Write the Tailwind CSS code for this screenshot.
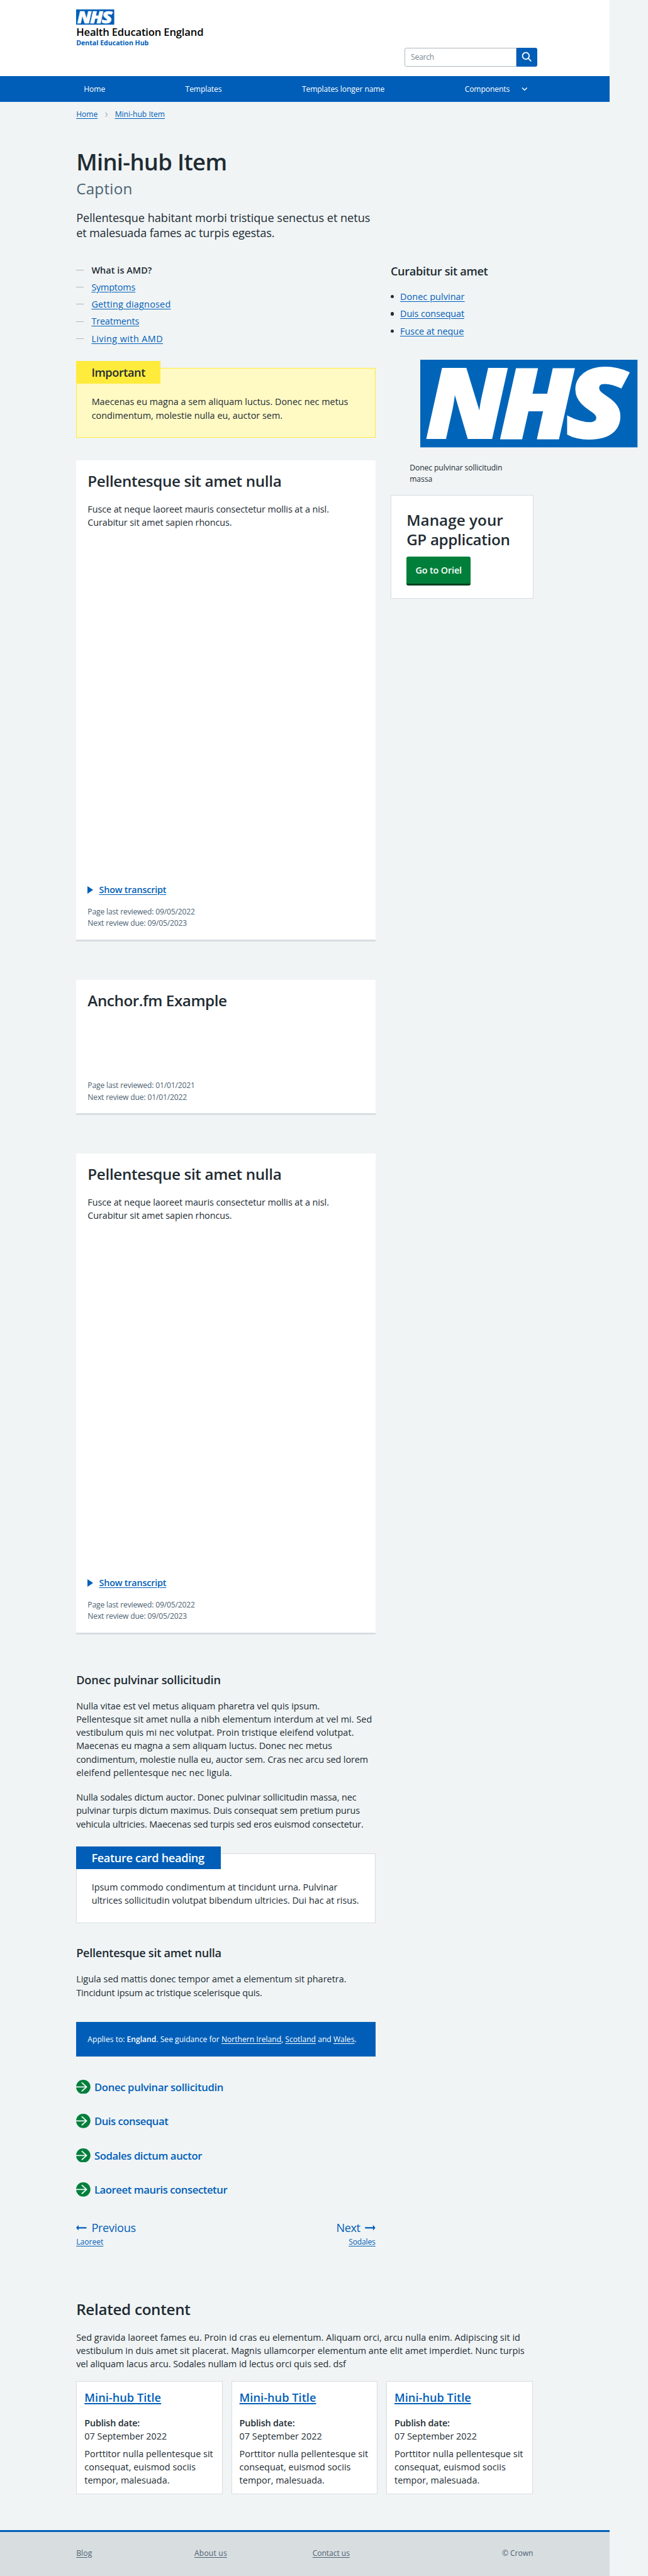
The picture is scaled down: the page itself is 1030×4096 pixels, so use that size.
<!DOCTYPE html>
<html lang="en">
<head>
<meta charset="utf-8">
<title>Mini-hub Item</title>
<script src="https://cdn.jsdelivr.net/npm/@tailwindcss/browser@4"></script>
</head>
<body class="h-[4096px] overflow-hidden bg-[#f0f4f5]">
<div class="flex h-[5410px] w-[1360px] flex-col bg-[#f0f4f5] font-['Open_Sans','Noto_Sans',sans-serif] text-[19px]/[28px] tracking-[-0.0051em] whitespace-nowrap text-[#212b32] [zoom:0.75725]">

  <header class="w-[1280px]">
    <div class="flex h-[160px] justify-between bg-white pr-[152px] pl-[160px]">
      <div class="pt-[20px]">
        <svg class="block h-[32px] w-[80px] overflow-visible" viewBox="0 0 456 184" preserveAspectRatio="none"><rect width="456" height="184" fill="#005eb8"/><g class="tracking-normal" font-family="Open Sans" font-weight="800" font-style="italic" font-size="202" fill="#fff" stroke="#fff" stroke-width="5"><text transform="translate(12.6 164.2) scale(1.047 1)">N</text><text transform="translate(167.5 164.2) scale(1.06 1)">H</text><text transform="translate(306.5 164.2) scale(1.15 1)">S</text></g></svg>
        <p class="mt-[2px] text-[22px]/[26px] font-semibold tracking-[-0.011em] text-black">Health Education England</p>
        <p class="text-[14px]/[20px] font-bold tracking-[-0.001em] text-[#005eb8]">Dental Education Hub</p>
      </div>
      <form class="mt-[100px] flex h-[40px] w-[279px]">
        <div class="flex flex-1 items-center rounded-l-[4px] border border-[#aeb7bd] pt-[1px] pl-[12px] text-[16px]/[24px] tracking-[-0.017em] text-[#768692]">Search</div>
        <div class="flex w-[44px] items-center justify-center rounded-r-[4px] bg-[#005eb8]">
          <svg class="size-[28px]" viewBox="0 0 24 24" fill="#fff"><path d="M19.71 18.29l-4.11-4.1a7 7 0 1 0-1.41 1.41l4.1 4.11a1 1 0 0 0 1.42 0 1 1 0 0 0 0-1.42zM5 10a5 5 0 1 1 5 5 5 5 0 0 1-5-5z"/></svg>
        </div>
      </form>
    </div>
    <nav class="flex h-[54px] items-center justify-between bg-[#005eb8] pt-[1px] pr-[170px] pl-[176px] text-[16px]/[24px] tracking-[-0.008em] text-white">
      <span>Home</span>
      <span>Templates</span>
      <span>Templates longer name</span>
      <span class="flex items-center gap-[22px]"><span>Components</span>
        <svg class="h-[18px] w-[18px]" viewBox="0 0 18 18" fill="none" stroke="#fff" stroke-width="2" stroke-linecap="round" stroke-linejoin="round"><path d="M4.500 6.500L9 11L13.500 6.500"/></svg></span>
    </nav>
  </header>

  <main class="ml-[160px] w-[1180px]">
    <nav class="flex items-center pt-[15px] text-[16px]/[24px] tracking-[0em] text-[#005eb8]">
      <a class="underline underline-offset-2">Home</a>
      <svg class="mx-[11px] h-[14px] w-[14px]" viewBox="0 0 14 14" fill="none" stroke="#aeb7bd" stroke-width="1.800" stroke-linecap="round"><path d="M5.500 3L8.500 7L5.500 11"/></svg>
      <a class="underline underline-offset-2">Mini-hub Item</a>
    </nav>

    <h1 class="mt-[59px] text-[48px]/[56px] font-semibold tracking-[-0.018em]">Mini-hub Item</h1>
    <p class="mt-[9px] text-[32px]/[40px] tracking-[0.01em] text-[#4c6272]">Caption</p>
    <p class="mt-[24px] text-[24px]/[32px] tracking-[-0.0024em]">Pellentesque habitant morbi tristique senectus et netus<br><span class="tracking-[-0.01em]">et malesuada fames ac turpis egestas.</span></p>

    <div class="mt-[48px] flex items-start gap-[32px]">
      <div class="w-[628px]">
        <ul class="flex flex-col gap-[8px] text-[#005eb8]">
          <li class="flex items-center gap-[16px] font-semibold text-[#212b32]"><span class="h-px w-[16px] bg-[#aeb7bd]"></span><span class="tracking-[0.006em]">What is AMD?</span></li>
          <li class="flex items-center gap-[16px]"><span class="h-px w-[16px] bg-[#aeb7bd]"></span><a class="tracking-[-0.012em] underline underline-offset-2">Symptoms</a></li>
          <li class="flex items-center gap-[16px]"><span class="h-px w-[16px] bg-[#aeb7bd]"></span><a class="tracking-[0.016em] underline underline-offset-2">Getting diagnosed</a></li>
          <li class="flex items-center gap-[16px]"><span class="h-px w-[16px] bg-[#aeb7bd]"></span><a class="tracking-[-0.01em] underline underline-offset-2">Treatments</a></li>
          <li class="flex items-center gap-[16px]"><span class="h-px w-[16px] bg-[#aeb7bd]"></span><a class="tracking-[0.03em] underline underline-offset-2">Living with AMD</a></li>
        </ul>

        <section class="mt-[33px] h-[161px]">
          <h3 class="relative z-10 flex h-[48px] w-[177px] items-center bg-[#ffeb3b] pl-[32px] text-[24px]/[32px] font-semibold tracking-[-0.024em]">Important</h3>
          <div class="-mt-[33px] h-[146px] border border-[#ffeb3b] bg-[#fff9c4] pt-[55.5px] pl-[31px] tracking-[0.001em]">Maecenas eu magna a sem aliquam luctus. Donec nec metus<br>condimentum, molestie nulla eu, auctor sem.</div>
        </section>

        <section class="mt-[48px] flex h-[1010px] flex-col border-b-4 border-[#d8dde0] bg-white px-[24px] pt-[24px]">
          <h2 class="text-[32px]/[40px] font-semibold tracking-[-0.0144em]">Pellentesque sit amet nulla</h2>
          <p class="mt-[24px]">Fusce at neque laoreet mauris consectetur mollis at a nisl.<br>Curabitur sit amet sapien rhoncus.</p>
          <div class="mt-auto flex items-center gap-[12px] font-semibold text-[#005eb8]"><svg class="h-[16px] w-[12px]" viewBox="0 0 12 16"><path d="M0 0L12 8L0 16z" fill="#005eb8"/></svg><a class="tracking-[-0.013em] underline underline-offset-2">Show transcript</a></div>
          <p class="mt-[20.5px] mb-[22px] text-[16px]/[24px] tracking-[-0.0135em] text-[#4c6272]">Page last reviewed: 09/05/2022<br>Next review due: 09/05/2023</p>
        </section>

        <section class="mt-[80px] flex h-[285px] flex-col border-b-4 border-[#d8dde0] bg-white px-[24px] pt-[24px]">
          <h2 class="text-[32px]/[40px] font-semibold tracking-[-0.018em]">Anchor.fm Example</h2>
          <p class="mt-auto mb-[22px] text-[16px]/[24px] tracking-[-0.0135em] text-[#4c6272]">Page last reviewed: 01/01/2021<br>Next review due: 01/01/2022</p>
        </section>

        <section class="mt-[80px] flex h-[1010px] flex-col border-b-4 border-[#d8dde0] bg-white px-[24px] pt-[24px]">
          <h2 class="text-[32px]/[40px] font-semibold tracking-[-0.0144em]">Pellentesque sit amet nulla</h2>
          <p class="mt-[24px]">Fusce at neque laoreet mauris consectetur mollis at a nisl.<br>Curabitur sit amet sapien rhoncus.</p>
          <div class="mt-auto flex items-center gap-[12px] font-semibold text-[#005eb8]"><svg class="h-[16px] w-[12px]" viewBox="0 0 12 16"><path d="M0 0L12 8L0 16z" fill="#005eb8"/></svg><a class="tracking-[-0.013em] underline underline-offset-2">Show transcript</a></div>
          <p class="mt-[20.5px] mb-[22px] text-[16px]/[24px] tracking-[-0.0135em] text-[#4c6272]">Page last reviewed: 09/05/2022<br>Next review due: 09/05/2023</p>
        </section>

        <h3 class="mt-[80px] text-[24px]/[32px] font-semibold tracking-[-0.007em]">Donec pulvinar sollicitudin</h3>
        <p class="mt-[24px]"><span class="tracking-[0.001em]">Nulla vitae est vel metus aliquam pharetra vel quis ipsum.</span><br><span class="tracking-[0.0045em]">Pellentesque sit amet nulla a nibh elementum interdum at vel mi. Sed</span><br><span class="tracking-[0.005em]">vestibulum quis mi nec volutpat. Proin tristique eleifend volutpat.</span><br><span class="tracking-[-0.0005em]">Maecenas eu magna a sem aliquam luctus. Donec nec metus</span><br><span class="tracking-[-0.004em]">condimentum, molestie nulla eu, auctor sem. Cras nec arcu sed lorem</span><br><span class="tracking-[0.0098em]">eleifend pellentesque nec nec ligula.</span></p>
        <p class="mt-[24px]"><span class="tracking-[-0.004em]">Nulla sodales dictum auctor. Donec pulvinar sollicitudin massa, nec</span><br><span class="tracking-[-0.0057em]">pulvinar turpis dictum maximus. Duis consequat sem pretium purus</span><br><span class="tracking-[-0.0093em]">vehicula ultricies. Maecenas sed turpis sed eros euismod consectetur.</span></p>

        <section class="mt-[33px] h-[161px]">
          <h3 class="relative z-10 flex h-[48px] w-[303px] items-center bg-[#005eb8] pl-[32px] text-[24px]/[32px] font-semibold tracking-[-0.019em] text-white">Feature card heading</h3>
          <div class="-mt-[33px] h-[146px] border border-[#d8dde0] bg-white pt-[55.5px] pl-[31px]"><span class="tracking-[0.002em]">Ipsum commodo condimentum at tincidunt urna. Pulvinar</span><br><span class="tracking-[-0.002em]">ultrices sollicitudin volutpat bibendum ultricies. Dui hac at risus.</span></div>
        </section>

        <h3 class="mt-[47px] text-[24px]/[32px] font-semibold tracking-[-0.015em]">Pellentesque sit amet nulla</h3>
        <p class="mt-[25px]"><span class="tracking-[0.0023em]">Ligula sed mattis donec tempor amet a elementum sit pharetra.</span><br><span class="tracking-[-0.008em]">Tincidunt ipsum ac tristique scelerisque quis.</span></p>

        <div class="mt-[48px] flex h-[72px] items-center bg-[#005eb8] px-[24px] pt-[3px] text-[16px]/[24px] tracking-[0em] text-white"><p>Applies to: <b class="font-semibold">England</b>. See guidance for <a class="underline underline-offset-2">Northern Ireland</a>, <a class="underline underline-offset-2">Scotland</a> and <a class="underline underline-offset-2">Wales</a>.</p></div>

        <ul class="mt-[49px] flex flex-col gap-[42px] text-[22px]/[30px] font-semibold text-[#005eb8]">
          <li class="flex h-[30px] items-center gap-[8px]"><svg class="size-[30px]" viewBox="0 0 30 30" fill="none"><circle cx="15" cy="15" r="15" fill="#007f3b"/><path d="M0 15H22M12.500 6.500L22 15L12.500 23.500" stroke="#f0f4f5" stroke-width="2.500" stroke-linecap="round" stroke-linejoin="round"/></svg><span class="pt-[3px] tracking-[-0.019em]">Donec pulvinar sollicitudin</span></li>
          <li class="flex h-[30px] items-center gap-[8px]"><svg class="size-[30px]" viewBox="0 0 30 30" fill="none"><circle cx="15" cy="15" r="15" fill="#007f3b"/><path d="M0 15H22M12.500 6.500L22 15L12.500 23.500" stroke="#f0f4f5" stroke-width="2.500" stroke-linecap="round" stroke-linejoin="round"/></svg><span class="pt-[3px] tracking-[-0.027em]">Duis consequat</span></li>
          <li class="flex h-[30px] items-center gap-[8px]"><svg class="size-[30px]" viewBox="0 0 30 30" fill="none"><circle cx="15" cy="15" r="15" fill="#007f3b"/><path d="M0 15H22M12.500 6.500L22 15L12.500 23.500" stroke="#f0f4f5" stroke-width="2.500" stroke-linecap="round" stroke-linejoin="round"/></svg><span class="pt-[3px] tracking-[-0.0225em]">Sodales dictum auctor</span></li>
          <li class="flex h-[30px] items-center gap-[8px]"><svg class="size-[30px]" viewBox="0 0 30 30" fill="none"><circle cx="15" cy="15" r="15" fill="#007f3b"/><path d="M0 15H22M12.500 6.500L22 15L12.500 23.500" stroke="#f0f4f5" stroke-width="2.500" stroke-linecap="round" stroke-linejoin="round"/></svg><span class="pt-[3px] tracking-[-0.0245em]">Laoreet mauris consectetur</span></li>
        </ul>

        <div class="mt-[49px] flex justify-between text-[#005eb8]">
          <div>
            <p class="flex items-center gap-[10px] text-[24px]/[32px] tracking-[-0.017em]"><svg class="h-[14px] w-[22px]" viewBox="0 0 22 14"><path d="M0 7L5 1V5.500H21Q22 5.500 22 7T21 8.500H5V13z" fill="#005eb8"/></svg><span>Previous</span></p>
            <p class="mt-[3.5px] text-[16px]/[20px] tracking-[0em]"><a class="underline underline-offset-2">Laoreet</a></p>
          </div>
          <div class="text-right">
            <p class="flex items-center gap-[10px] text-[24px]/[32px] tracking-[-0.027em]"><span>Next</span><svg class="h-[14px] w-[22px]" viewBox="0 0 22 14"><path d="M22 7L17 1V5.500H1Q0 5.500 0 7T1 8.500H17V13z" fill="#005eb8"/></svg></p>
            <p class="mt-[3.5px] text-[16px]/[20px] tracking-[-0.015em]"><a class="underline underline-offset-2">Sodales</a></p>
          </div>
        </div>
      </div>

      <aside class="w-[518px]">
        <h3 class="text-[24px]/[32px] font-semibold tracking-[-0.018em]">Curabitur sit amet</h3>
        <ul class="mt-[24px] flex flex-col gap-[8px] text-[#005eb8]">
          <li class="flex items-center gap-[13px]"><span class="size-[7px] rounded-full bg-[#212b32]"></span><a class="tracking-[0.006em] underline underline-offset-2">Donec pulvinar</a></li>
          <li class="flex items-center gap-[13px]"><span class="size-[7px] rounded-full bg-[#212b32]"></span><a class="tracking-[-0.008em] underline underline-offset-2">Duis consequat</a></li>
          <li class="flex items-center gap-[13px]"><span class="size-[7px] rounded-full bg-[#212b32]"></span><a class="tracking-[0em] underline underline-offset-2">Fusce at neque</a></li>
        </ul>
        <figure class="mt-[46px] pl-[40px]">
          <svg class="ml-[22px] block h-[184px] w-[456px] overflow-visible" viewBox="0 0 456 184"><rect width="456" height="184" fill="#0065b9"/><g class="tracking-normal" font-family="Open Sans" font-weight="800" font-style="italic" font-size="202" fill="#fff" stroke="#fff" stroke-width="5"><text transform="translate(12.6 164.2) scale(1.047 1)">N</text><text transform="translate(167.5 164.2) scale(1.06 1)">H</text><text transform="translate(306.5 164.2) scale(1.15 1)">S</text></g></svg>
          <figcaption class="mt-[31.5px] text-[16px]/[24px]">Donec pulvinar sollicitudin<br>massa</figcaption>
        </figure>
        <section class="mt-[21.5px] h-[217px] w-[300px] border border-[#d8dde0] bg-white px-[32px] pt-[31.5px]">
          <h2 class="text-[32px]/[40px] font-semibold"><span class="tracking-[0.0025em]">Manage your</span><br><span class="tracking-[-0.014em]">GP application</span></h2>
          <div class="mt-[16.5px] flex h-[60px] w-[135px] items-center justify-center rounded-[4px] border-b-4 border-[#00401e] bg-[#007f3b] font-semibold tracking-[-0.0095em] text-white">Go to Oriel</div>
        </section>
      </aside>
    </div>

    <section class="mt-[112.5px] w-[958px]">
      <h2 class="text-[32px]/[40px] font-semibold tracking-[-0.0123em]">Related content</h2>
      <p class="mt-[24px]"><span class="tracking-[0.0037em]">Sed gravida laoreet fames eu. Proin id cras eu elementum. Aliquam orci, arcu nulla enim. Adipiscing sit id</span><br><span class="tracking-[0.0014em]">vestibulum in duis amet sit placerat. Magnis ullamcorper elementum ante elit amet imperdiet. Nunc turpis</span><br><span class="tracking-[-0.004em]">vel aliquam lacus arcu. Sodales nullam id lectus orci quis sed. dsf</span></p>
      <div class="mt-[22px] grid grid-cols-3 gap-[18px]">
        <article class="h-[238px] border border-[#d8dde0] bg-white px-[16px] pt-[17px]">
          <h3 class="text-[24px]/[32px] font-semibold tracking-[0.002em] text-[#005eb8]"><a class="underline decoration-3 underline-offset-2">Mini-hub Title</a></h3>
          <p class="mt-[24px]"><b class="font-semibold tracking-[-0.0115em]">Publish date:</b><br><span class="tracking-[0.001em]">07 September 2022</span></p>
          <p class="mt-[8px] tracking-[0.003em]">Porttitor nulla pellentesque sit<br>consequat, euismod sociis<br>tempor, malesuada.</p>
        </article>
        <article class="h-[238px] border border-[#d8dde0] bg-white px-[16px] pt-[17px]">
          <h3 class="text-[24px]/[32px] font-semibold tracking-[0.002em] text-[#005eb8]"><a class="underline decoration-3 underline-offset-2">Mini-hub Title</a></h3>
          <p class="mt-[24px]"><b class="font-semibold tracking-[-0.0115em]">Publish date:</b><br><span class="tracking-[0.001em]">07 September 2022</span></p>
          <p class="mt-[8px] tracking-[0.003em]">Porttitor nulla pellentesque sit<br>consequat, euismod sociis<br>tempor, malesuada.</p>
        </article>
        <article class="h-[238px] border border-[#d8dde0] bg-white px-[16px] pt-[17px]">
          <h3 class="text-[24px]/[32px] font-semibold tracking-[0.002em] text-[#005eb8]"><a class="underline decoration-3 underline-offset-2">Mini-hub Title</a></h3>
          <p class="mt-[24px]"><b class="font-semibold tracking-[-0.0115em]">Publish date:</b><br><span class="tracking-[0.001em]">07 September 2022</span></p>
          <p class="mt-[8px] tracking-[0.003em]">Porttitor nulla pellentesque sit<br>consequat, euismod sociis<br>tempor, malesuada.</p>
        </article>
      </div>
    </section>
  </main>

  <footer class="mt-auto h-[98px] w-[1280px] border-t-4 border-[#005eb8] bg-[#d8dde0] pt-[33px] pr-[161px] pl-[160px] text-[16px]/[24px] text-[#4c6272]">
    <div class="flex">
      <span class="w-[248px]"><a class="tracking-[0.01em] underline underline-offset-2">Blog</a></span>
      <span class="w-[248px]"><a class="tracking-[0.015em] underline underline-offset-2">About us</a></span>
      <span><a class="underline underline-offset-2">Contact us</a></span>
      <span class="ml-auto">© Crown</span>
    </div>
  </footer>
</div>
</body>
</html>
